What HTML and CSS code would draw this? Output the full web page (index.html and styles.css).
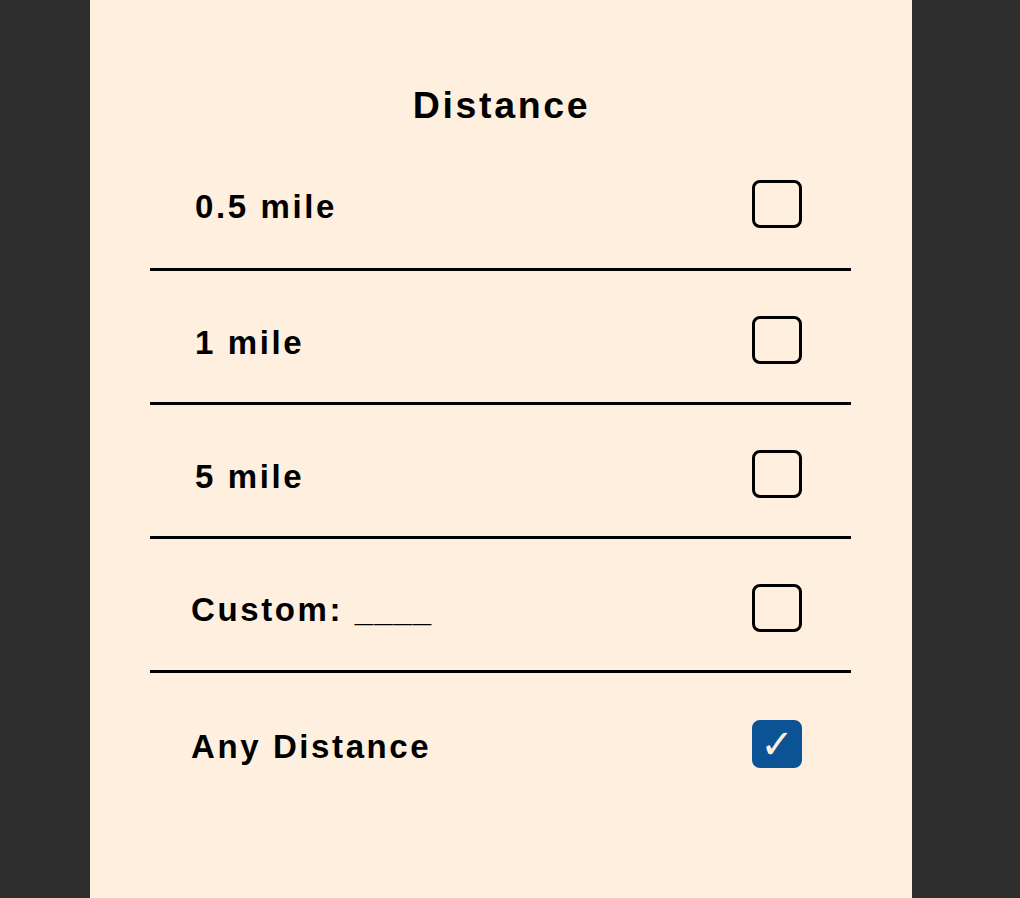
FILE: index.html
```html
<!DOCTYPE html>
<html>
<head>
<meta charset="utf-8">
<link rel="stylesheet" href="styles.css">
</head>
<body>
<div class="panel">
  <h1 class="title">Distance</h1>
  <ul class="list">
    <li class="row first"><span class="label num">0.5 mile</span><span class="box"></span></li>
    <li class="row"><span class="label num">1 mile</span><span class="box"></span></li>
    <li class="row"><span class="label num">5 mile</span><span class="box"></span></li>
    <li class="row"><span class="label">Custom: <span class="blank">____</span></span><span class="box"></span></li>
    <li class="row last"><span class="label">Any Distance</span><span class="box checked">✓</span></li>
  </ul>
</div>
</body>
</html>
```
FILE: styles.css
```css
html, body {
  margin: 0;
  padding: 0;
  height: 100%;
  background: #2e2e2e;
}
body {
  font-family: "Liberation Sans", Arial, sans-serif;
  color: #000;
  overflow: hidden;
}
.panel {
  margin-left: 90px;
  width: 822px;
  height: 898px;
  background: #feefdf;
  box-sizing: border-box;
  padding: 80px 61px 0 60px;
}
.title {
  margin: 0;
  font-size: 37.5px;
  font-weight: bold;
  letter-spacing: 0.07em;
  text-align: center;
  line-height: 50px;
  padding-left: 2px;
}
.list {
  list-style: none;
  margin: 0;
  padding: 0;
}
.row {
  display: flex;
  align-items: center;
  justify-content: space-between;
  height: 125px;
  padding: 6px 49px 0 41px;
  border-bottom: 3px solid #000;
}
.row.first {
  height: 129px;
  padding-top: 9px;
}
.row.last {
  border-bottom: none;
  height: 130px;
}
.label {
  font-size: 33px;
  font-weight: bold;
  letter-spacing: 2.6px;
  padding-top: 5px;
}
.label.num {
  padding-left: 4px;
  padding-top: 7px;
}
.blank {
  letter-spacing: 1px;
}
.box {
  width: 44px;
  height: 42px;
  border: 3px solid #000;
  border-radius: 8px;
  box-sizing: content-box;
  display: flex;
  align-items: center;
  justify-content: center;
}
.box.checked {
  background: #0b5394;
  border-color: #0b5394;
  color: #feefdf;
  font-family: "DejaVu Sans", sans-serif;
  font-size: 40px;
  line-height: 1;
}
```
